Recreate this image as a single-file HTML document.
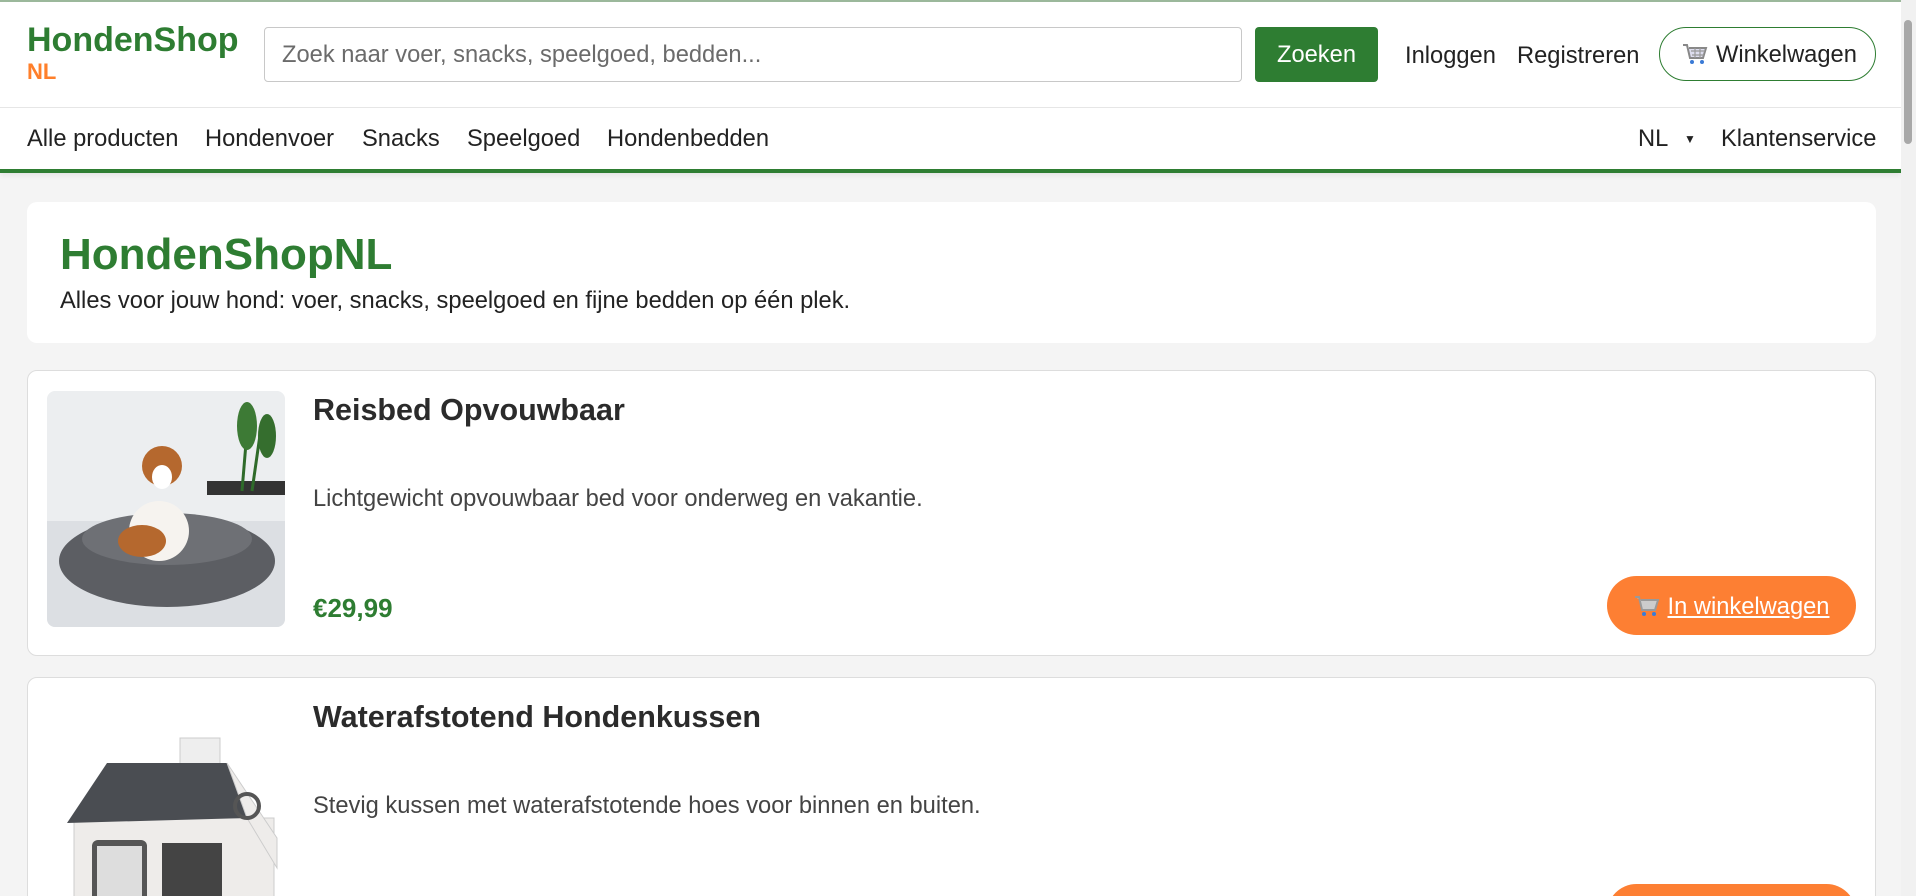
<!DOCTYPE html>
<html><head><meta charset="utf-8"><style>
*{box-sizing:border-box;margin:0;padding:0}
html,body{width:1916px;height:896px;overflow:hidden}
body{background:#f4f4f4;font-family:"Liberation Sans",Arial,sans-serif;color:#222;position:relative}
.top{position:absolute;left:0;top:0;width:1901px;height:2px;background:#9bb89b}
header{position:absolute;left:0;top:0;width:1901px;height:173px;background:#fff;border-bottom:4px solid #2e7d32;box-shadow:0 2px 6px rgba(0,0,0,.08)}
.hr{position:absolute;left:0;top:107px;width:1901px;height:1px;background:#e6e6e6}
.logo{position:absolute;left:27px;top:20px;font-weight:bold;color:#2e7d32;font-size:34px;line-height:40px}
.logo span{display:block;color:#ff7f2a;font-size:22px;line-height:24px}
.search{position:absolute;left:264px;top:27px;width:978px;height:55px;border:1px solid #c8c8c8;border-radius:4px;font-size:23.7px;color:#6b6b6b;padding:14px 17px}
.btn{position:absolute;left:1255px;top:27px;width:123px;height:55px;background:#2e7d32;color:#fff;border-radius:4px;font-size:23.7px;text-align:center;line-height:57px}
.t{position:absolute;font-size:23.7px;color:#222}
.cart{position:absolute;left:1659px;top:27px;width:217px;height:54px;border:1.5px solid #2e7d32;border-radius:27px;font-size:23.7px;line-height:54px;padding-left:22px;white-space:nowrap}
.cart svg,.ob svg{vertical-align:-4px;margin-right:8px}
nav .t{top:126px}
.card{position:absolute;left:27px;width:1849px;background:#fff;border-radius:10px}
.hero{top:202px;height:141px}
.hero h1{position:absolute;left:33px;top:28px;font-size:44px;color:#2e7d32}
.hero p{position:absolute;left:33px;top:86px;font-size:23.7px}
.p{border:1px solid #ddd}
.img{position:absolute;left:19px;top:20px;width:238px;height:236px;border-radius:8px;overflow:hidden}
.p h2{position:absolute;left:285px;top:22px;font-size:30.5px;color:#2b2b2b}
.p .d{position:absolute;left:285px;top:115px;font-size:23.7px;color:#444}
.p .pr{position:absolute;left:285px;top:222px;font-size:26px;font-weight:bold;color:#2e7d32}
.ob{position:absolute;left:1579px;top:205px;width:249px;height:59px;border-radius:30px;background:#fd7f33;color:#fff;font-size:23.7px;line-height:62px;text-align:center;text-decoration:underline;white-space:nowrap}
.sb{position:absolute;left:1901px;top:0;width:15px;height:896px;background:#f1f1f1}
.sb i{position:absolute;left:3px;top:20px;width:8px;height:124px;background:#a8a8a8;border-radius:4px}
</style></head><body>
<header>
<div class="logo">HondenShop<span>NL</span></div>
<div class="search">Zoek naar voer, snacks, speelgoed, bedden...</div>
<div class="btn">Zoeken</div>
<div class="t" style="left:1405px;top:43px">Inloggen</div>
<div class="t" style="left:1517px;top:43px">Registreren</div>
<div class="cart"><svg width="26" height="24" viewBox="0 0 26 24"><path d="M1 3h4l3 13h13l3-10H7" fill="#dde" stroke="#888" stroke-width="2"/><path d="M9 9h14M10 13h12M13 6v10M18 6v10" stroke="#999" stroke-width="1.2"/><circle cx="10" cy="20" r="2" fill="#3b7bd6"/><circle cx="20" cy="20" r="2" fill="#3b7bd6"/></svg>Winkelwagen</div>
<div class="hr"></div>
<nav>
<div class="t" style="left:27px">Alle producten</div>
<div class="t" style="left:205px">Hondenvoer</div>
<div class="t" style="left:362px">Snacks</div>
<div class="t" style="left:467px">Speelgoed</div>
<div class="t" style="left:607px">Hondenbedden</div>
<div class="t" style="left:1638px">NL <span style="font-size:12px;margin-left:10px;vertical-align:3px">▼</span></div>
<div class="t" style="left:1721px">Klantenservice</div>
</nav>
</header>
<div class="top"></div>
<div class="card hero"><h1>HondenShopNL</h1><p>Alles voor jouw hond: voer, snacks, speelgoed en fijne bedden op één plek.</p></div>

<div class="card p" style="top:370px;height:286px">
<div class="img"><svg width="238" height="236" viewBox="0 0 238 236">
<rect width="238" height="236" fill="#eceef0"/><rect y="130" width="238" height="106" fill="#dcdfe3"/>
<rect x="160" y="90" width="78" height="14" fill="#333"/>
<path d="M195 100 L200 40 M205 100 L215 30" stroke="#2f6b2a" stroke-width="3"/>
<ellipse cx="200" cy="35" rx="10" ry="24" fill="#3d7a35"/><ellipse cx="220" cy="45" rx="9" ry="22" fill="#356e2e"/>
<ellipse cx="120" cy="170" rx="108" ry="46" fill="#5c5e63"/><ellipse cx="120" cy="148" rx="85" ry="26" fill="#6e7075"/>
<ellipse cx="112" cy="140" rx="30" ry="30" fill="#f6f3ef"/><ellipse cx="95" cy="150" rx="24" ry="16" fill="#b5682e"/>
<circle cx="115" cy="75" r="20" fill="#b5682e"/><ellipse cx="115" cy="86" rx="10" ry="12" fill="#fff"/>
</svg></div>
<h2>Reisbed Opvouwbaar</h2>
<div class="d">Lichtgewicht opvouwbaar bed voor onderweg en vakantie.</div>
<div class="pr">€29,99</div>
<div class="ob"><svg width="26" height="24" viewBox="0 0 26 24"><path d="M1 3h4l3 13h13l3-10H7" fill="#ccc" stroke="#999" stroke-width="2"/><circle cx="10" cy="20" r="2" fill="#3b7bd6"/><circle cx="20" cy="20" r="2" fill="#3b7bd6"/></svg>In winkelwagen</div>
</div>

<div class="card p" style="top:677px;height:300px">
<div class="img" style="top:20px"><svg width="238" height="236" viewBox="0 0 238 236">
<rect width="238" height="236" fill="#fff"/>
<rect x="133" y="40" width="40" height="30" fill="#eee" stroke="#ccc"/>
<rect x="27" y="120" width="200" height="116" fill="#eeecea" stroke="#ccc"/>
<path d="M20 125 L60 65 L180 65 L200 120 Z" fill="#4a4d52"/>
<path d="M180 65 L230 140 L230 170 L200 120 Z" fill="#eeecea" stroke="#ccc"/>
<rect x="45" y="142" width="55" height="80" fill="#555" rx="6"/><rect x="50" y="148" width="45" height="70" fill="#ddd"/>
<rect x="115" y="145" width="60" height="65" fill="#444"/>
<circle cx="200" cy="108" r="12" fill="none" stroke="#555" stroke-width="4"/>
</svg></div>
<h2>Waterafstotend Hondenkussen</h2>
<div class="d">Stevig kussen met waterafstotende hoes voor binnen en buiten.</div>
<div class="ob" style="top:206px">In winkelwagen</div>
</div>
<div class="sb"><i></i></div>
</body></html>
